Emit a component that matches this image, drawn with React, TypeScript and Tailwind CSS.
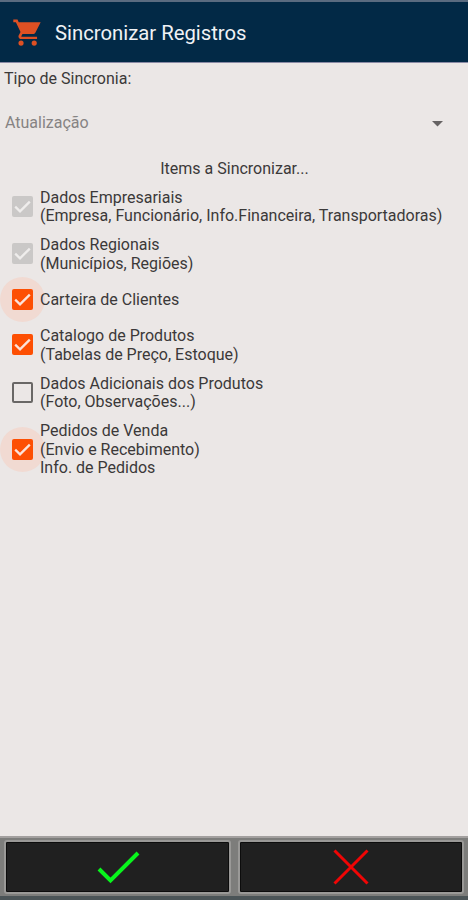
import React, { useState } from 'react';

interface SyncItem {
  id: string;
  lines: string[];
  checked: boolean;
  disabled?: boolean;
  ripple?: boolean;
}

const initialItems: SyncItem[] = [
  {
    id: 'empresa',
    lines: ['Dados Empresariais', '(Empresa, Funcionário, Info.Financeira, Transportadoras)'],
    checked: true,
    disabled: true,
  },
  { id: 'regionais', lines: ['Dados Regionais', '(Municípios, Regiões)'], checked: true, disabled: true },
  { id: 'clientes', lines: ['Carteira de Clientes'], checked: true, ripple: true },
  { id: 'produtos', lines: ['Catalogo de Produtos', '(Tabelas de Preço, Estoque)'], checked: true },
  { id: 'adicionais', lines: ['Dados Adicionais dos Produtos', '(Foto, Observações...)'], checked: false },
  {
    id: 'pedidos',
    lines: ['Pedidos de Venda', '(Envio e Recebimento)', 'Info. de Pedidos'],
    checked: true,
    ripple: true,
  },
];

const CartIcon = () => (
  <svg viewBox="0 0 24 24" className="h-[31px] w-[31px] fill-[#de5023]">
    <path d="M1 2v2h2l3.6 7.59-1.35 2.45c-.16.28-.25.61-.25.96 0 1.1.9 2 2 2h12.400v-1.800H7.42c-.14 0-.25-.11-.25-.25l.03-.12.9-1.63h8.200c.75 0 1.41-.41 1.75-1.03L22.200 4H5.21l-.94-2H1z" />
    <circle cx="7" cy="20.200" r="2" />
    <circle cx="17.200" cy="20.200" r="2" />
  </svg>
);

const CheckBox: React.FC<{ item: SyncItem }> = ({ item }) => {
  const color = item.disabled ? 'bg-[#cac8c7]' : 'bg-[#fd4f03]';
  return (
    <span className="relative mb-[2px] h-[21px] w-[21px] shrink-0">
      {item.ripple && <span className="absolute -inset-[12px] rounded-full bg-[#f1dad2]" />}
      {item.checked ? (
        <span className={`absolute inset-0 rounded-[2px] ${color}`}>
          <svg viewBox="0 0 21 21" className="h-full w-full fill-none" strokeWidth="2.3">
            <path d="M3.2 10.7 8 15.3 17.8 5.6" className={item.disabled ? 'stroke-[#efedec]' : 'stroke-[#fbe3da]'} />
          </svg>
        </span>
      ) : (
        <span className="absolute inset-0 rounded-[2px] border-2 border-[#696766]" />
      )}
    </span>
  );
};

const App: React.FC = () => {
  const [items, setItems] = useState<SyncItem[]>(initialItems);

  const toggle = (id: string) => {
    setItems((prev) => prev.map((i) => (i.id === id && !i.disabled ? { ...i, checked: !i.checked } : i)));
  };

  return (
    <div className="flex h-[900px] w-[468px] flex-col overflow-hidden bg-[#ebe7e6] font-[Roboto,sans-serif] text-[16px] leading-[18.5px] text-[#3b3939]">
      <header className="flex h-[63px] shrink-0 items-center border-t-2 border-b border-t-[#5a6b80] border-b-[#8a8aa5] bg-[#022946] pl-[12px]">
        <CartIcon />
        <h1 className="ml-[12px] pt-[2px] text-[20.3px] leading-6 text-[#f0f2f5]">Sincronizar Registros</h1>
      </header>

      <main className="flex-1">
        <p className="pt-[6.5px] pl-[4px]">Tipo de Sincronia:</p>
        <button type="button" className="mt-[17px] flex h-[37px] w-full items-center justify-between pr-[25px] pl-[5px] text-[#868383]">
          Atualização
          <svg viewBox="0 0 11 6" className="h-[6px] w-[11px] fill-[#666363]">
            <path d="M0 0h11L5.500 5.500z" />
          </svg>
        </button>
        <p className="mt-[17.5px] pl-[1px] text-center">Items a Sincronizar...</p>

        <div className="mt-[5.5px]">
          {items.map((item) => (
            <div
              key={item.id}
              onClick={() => toggle(item.id)}
              className="flex min-h-[43.5px] items-center py-[5.25px] pl-[11.5px]"
            >
              <CheckBox item={item} />
              <div className="relative ml-[7.5px] whitespace-nowrap">
                {item.lines.map((line) => (
                  <div key={line}>{line}</div>
                ))}
              </div>
            </div>
          ))}
        </div>
      </main>

      <footer className="flex h-[64px] shrink-0 gap-[7px] border-t-2 border-b-4 border-t-[#a3a09f] border-b-[#4b5457] bg-[#7d7d7b] px-[4px] pt-[2px] pb-[2px]">
        <button type="button" className="flex flex-1 items-center justify-center rounded-[3px] border-2 border-[#9a9997] bg-[#202020] shadow-[inset_0_0_0_1px_#0c0c0c]">
          <svg viewBox="0 0 44 36" className="h-[36px] w-[44px] translate-x-[1px] fill-none stroke-[#08f51c]" strokeWidth="4">
            <path d="M3 20 14.500 31.500 42 4" />
          </svg>
        </button>
        <button type="button" className="flex flex-1 items-center justify-center rounded-[3px] border-2 border-[#9a9997] bg-[#202020] shadow-[inset_0_0_0_1px_#0c0c0c]">
          <svg viewBox="0 0 36 36" className="h-[36px] w-[36px] fill-none stroke-[#f00505]" strokeWidth="3">
            <path d="M1.500 1.500 34.500 34.500M34.500 1.500 1.500 34.500" />
          </svg>
        </button>
      </footer>
    </div>
  );
};

export default App;
